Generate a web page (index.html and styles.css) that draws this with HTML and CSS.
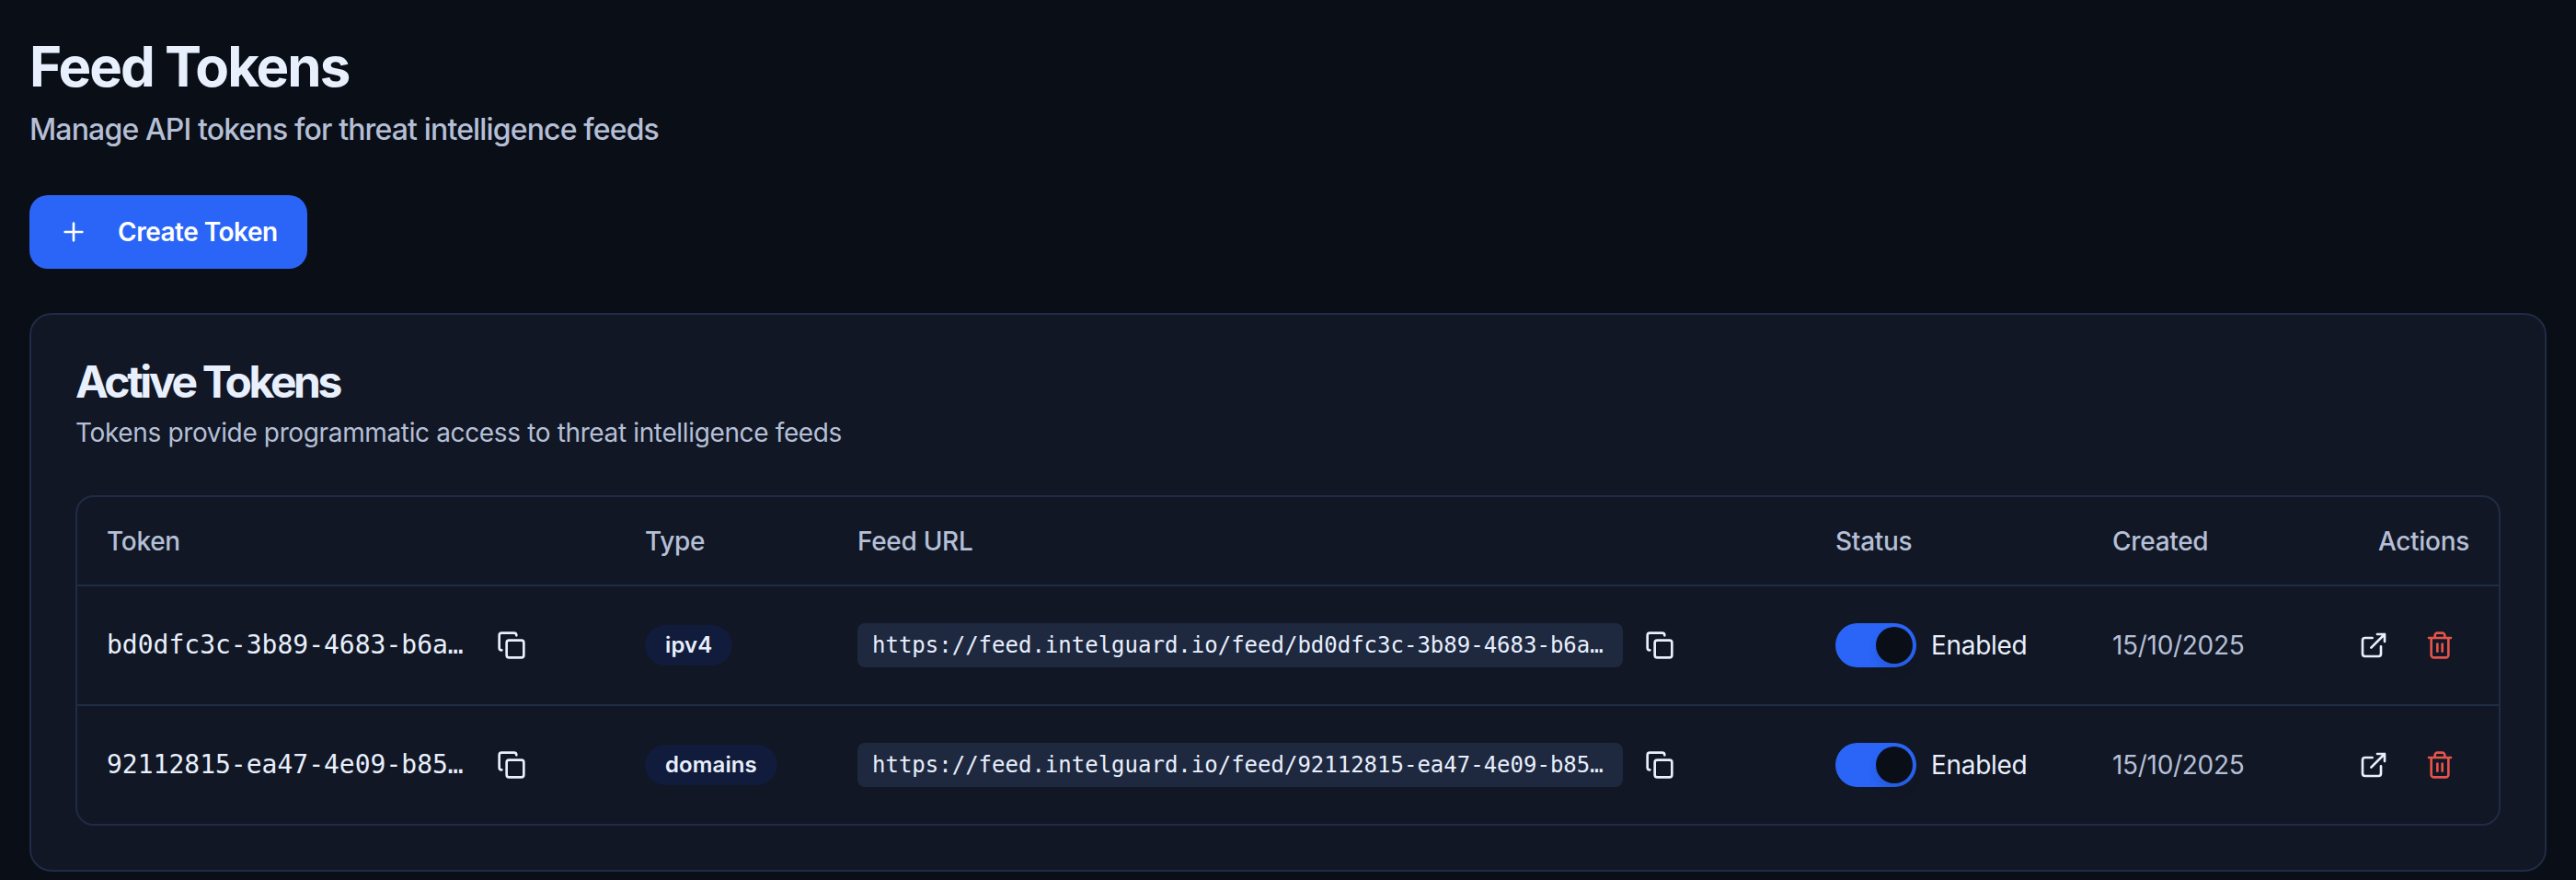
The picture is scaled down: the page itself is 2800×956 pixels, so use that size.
FILE: index.html
```html
<!DOCTYPE html>
<html lang="en">
<head>
  <meta charset="UTF-8">
  <meta name="viewport" content="width=device-width, initial-scale=1.0">
  <title>Feed Tokens</title>
  <link rel="stylesheet" href="styles.css">
</head>
<body>
  <!-- Shared icons -->
  <svg class="icon-defs" aria-hidden="true">
    <symbol id="icon-plus" viewBox="0 0 24 24"><path d="M5 12h14M12 5v14"/></symbol>
    <symbol id="icon-copy" viewBox="0 0 24 24">
      <rect x="8" y="8" width="14" height="14" rx="2"/>
      <path d="M4 16c-1.1 0-2-.9-2-2V4c0-1.1.9-2 2-2h10c1.1 0 2 .9 2 2"/>
    </symbol>
    <symbol id="icon-open" viewBox="0 0 24 24">
      <path d="M15 3h6v6M10 14 21 3"/>
      <path d="M18 13v6a2 2 0 0 1-2 2H5a2 2 0 0 1-2-2V8a2 2 0 0 1 2-2h6"/>
    </symbol>
    <symbol id="icon-trash" viewBox="0 0 24 24">
      <path d="M3 6h18M19 6v14c0 1-1 2-2 2H7c-1 0-2-1-2-2V6"/>
      <path d="M8 6V4c0-1 1-2 2-2h4c1 0 2 1 2 2v2M10 11v6M14 11v6"/>
    </symbol>
  </svg>

  <main class="page">
    <header class="page-header">
      <h1>Feed Tokens</h1>
      <p>Manage API tokens for threat intelligence feeds</p>
    </header>

    <button class="create-button">
      <svg class="icon"><use href="#icon-plus"/></svg>
      <span>Create Token</span>
    </button>

    <section class="card">
      <h2>Active Tokens</h2>
      <p class="card-description">Tokens provide programmatic access to threat intelligence feeds</p>

      <div class="token-table">
        <div class="row row-head">
          <div>Token</div>
          <div>Type</div>
          <div>Feed URL</div>
          <div>Status</div>
          <div>Created</div>
          <div class="actions-head">Actions</div>
        </div>

        <div class="row">
          <div class="cell-copy">
            <span class="token">bd0dfc3c-3b89-4683-b6a…</span>
            <button class="icon-button" aria-label="Copy token"><svg class="icon"><use href="#icon-copy"/></svg></button>
          </div>
          <div><span class="badge">ipv4</span></div>
          <div class="cell-copy">
            <code class="feed-url">https://feed.intelguard.io/feed/bd0dfc3c-3b89-4683-b6a…</code>
            <button class="icon-button" aria-label="Copy URL"><svg class="icon"><use href="#icon-copy"/></svg></button>
          </div>
          <div class="status">
            <button class="switch" role="switch" aria-checked="true" aria-label="Enabled"><span class="thumb"></span></button>
            <span class="status-label">Enabled</span>
          </div>
          <div class="created">15/10/2025</div>
          <div class="actions">
            <button class="icon-button" aria-label="Open"><svg class="icon"><use href="#icon-open"/></svg></button>
            <button class="icon-button delete" aria-label="Delete"><svg class="icon"><use href="#icon-trash"/></svg></button>
          </div>
        </div>

        <div class="row">
          <div class="cell-copy">
            <span class="token">92112815-ea47-4e09-b85…</span>
            <button class="icon-button" aria-label="Copy token"><svg class="icon"><use href="#icon-copy"/></svg></button>
          </div>
          <div><span class="badge">domains</span></div>
          <div class="cell-copy">
            <code class="feed-url">https://feed.intelguard.io/feed/92112815-ea47-4e09-b85…</code>
            <button class="icon-button" aria-label="Copy URL"><svg class="icon"><use href="#icon-copy"/></svg></button>
          </div>
          <div class="status">
            <button class="switch" role="switch" aria-checked="true" aria-label="Enabled"><span class="thumb"></span></button>
            <span class="status-label">Enabled</span>
          </div>
          <div class="created">15/10/2025</div>
          <div class="actions">
            <button class="icon-button" aria-label="Open"><svg class="icon"><use href="#icon-open"/></svg></button>
            <button class="icon-button delete" aria-label="Delete"><svg class="icon"><use href="#icon-trash"/></svg></button>
          </div>
        </div>
      </div>
    </section>
  </main>
</body>
</html>
```
FILE: styles.css
```css
* {
  box-sizing: border-box;
}
body {
  margin: 0;
  background: #0a0e17;
  color: #e8effd;
  font-family: Inter, "Liberation Sans", sans-serif;
  font-size: 28px;
  line-height: 40px;
  letter-spacing: -0.3px;
}
h1, h2, p {
  margin: 0;
}
button {
  border: none;
  padding: 0;
  font: inherit;
  letter-spacing: inherit;
  cursor: pointer;
}
.icon-defs {
  display: none;
}
.icon {
  display: block;
  flex-shrink: 0;
  width: 32px;
  height: 32px;
  fill: none;
  stroke: currentColor;
  stroke-width: 2;
  stroke-linecap: round;
  stroke-linejoin: round;
}
.page {
  padding: 36px 32px 0;
}
.page-header h1 {
  font-size: 60px;
  line-height: 73px;
  font-weight: 700;
  letter-spacing: -2px;
}
.page-header p {
  margin-top: 8px;
  font-size: 32px;
  line-height: 48px;
  letter-spacing: -0.85px;
  font-weight: 450;
  color: #b5bfd6;
}
.create-button {
  display: flex;
  align-items: center;
  gap: 32px;
  width: 302px;
  height: 80px;
  margin: 47px 0 48px;
  padding: 0 32px;
  border-radius: 20px;
  background: #2a65f7;
  color: #fff;
  font-weight: 600;
  letter-spacing: -0.5px;
  white-space: nowrap;
}
.card {
  padding: 48px;
  border: 2px solid #202b46;
  border-radius: 24px;
  background: #111724;
}
.card h2 {
  font-size: 48px;
  line-height: 50px;
  font-weight: 650;
  letter-spacing: -3.4px;
}
.card-description {
  margin: 10px 0 48px;
  letter-spacing: -0.36px;
  color: #b5bfd6;
}

/* Token table */
.token-table {
  border: 2px solid #202b46;
  border-radius: 20px;
}
.row {
  display: grid;
  grid-template-columns: 585px 231px 1063px 301px 1fr 190px;
  align-items: center;
  height: 130px;
  border-bottom: 2px solid #202b46;
}
.row > div {
  padding: 0 32px;
}
.row:last-child {
  height: 128px;
  border-bottom: none;
}
.row-head {
  height: 97px;
  color: #b5bfd6;
  font-weight: 500;
}
.row .actions-head {
  text-align: right;
}
.cell-copy {
  display: flex;
  align-items: center;
  gap: 24px;
}
.token {
  width: 400px;
  font-family: "DejaVu Sans Mono", monospace;
  letter-spacing: 0;
}
.feed-url {
  width: 832px;
  height: 48px;
  padding: 0 16px;
  border-radius: 8px;
  background: #1e283f;
  font-family: "DejaVu Sans Mono", monospace;
  font-size: 24px;
  line-height: 48px;
  letter-spacing: 0;
}
.icon-button {
  background: transparent;
  color: #e8effd;
}
.badge {
  display: inline-block;
  padding: 6px 22px;
  border-radius: 22px;
  background: #111b3b;
  font-size: 24px;
  line-height: 32px;
  font-weight: 600;
  letter-spacing: 0.1px;
  vertical-align: middle;
}
.status {
  display: flex;
  align-items: center;
  gap: 16px;
}
.switch {
  display: flex;
  justify-content: flex-end;
  width: 88px;
  height: 48px;
  padding: 4px;
  border-radius: 24px;
  background: #2a65f7;
}
.thumb {
  width: 40px;
  height: 40px;
  border-radius: 50%;
  background: #0a0e17;
  box-shadow: 0 8px 12px rgba(0, 0, 0, 0.1);
}
.created {
  color: #b5bfd6;
}
.row .actions {
  display: flex;
  justify-content: flex-end;
  gap: 40px;
  padding-right: 48px;
}
.delete {
  color: #e5534b;
}
```
